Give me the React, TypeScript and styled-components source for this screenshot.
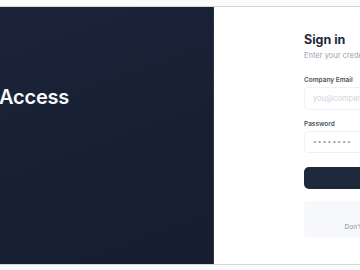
import React from "react";
import styled, { createGlobalStyle } from "styled-components";

const GlobalStyle = createGlobalStyle`
  html, body {
    margin: 0;
    padding: 0;
    background: #fbfbfc;
    overflow: hidden;
    font-family: Inter, "Noto Sans", "Liberation Sans", sans-serif;
  }
`;

const Shell = styled.div`
  width: 360px;
  height: 270px;
  padding-top: 6px;
  box-sizing: border-box;
  overflow: hidden;
`;

const Card = styled.div`
  display: grid;
  grid-template-columns: 214px 1fr;
  height: 257px;
  border-top: 1px solid #d4d6da;
  border-bottom: 1px solid #d4d6da;
  background: #ffffff;
`;

const Hero = styled.div`
  background: linear-gradient(160deg, #1b2438 0%, #172033 55%, #151d2f 100%);
  border-right: 1px solid #2a3347;
  display: flex;
  align-items: flex-start;
  padding-top: 78px;
  overflow: hidden;
`;

const HeroTitle = styled.h1`
  margin: 0 0 0 -1px;
  color: #f8fafc;
  font-size: 20px;
  line-height: 24px;
  font-weight: 600;
  letter-spacing: -0.2px;
  white-space: nowrap;
`;

const FormSide = styled.div`
  padding: 25px 0 0 90px;
  overflow: hidden;
`;

const Form = styled.div`
  width: 200px;
  display: flex;
  flex-direction: column;
`;

const Title = styled.h2`
  margin: 0;
  color: #1f2937;
  font-size: 12.5px;
  font-weight: 700;
  line-height: 16px;
`;

const Subtitle = styled.p`
  margin: 3px 0 0;
  color: #9aa3b0;
  font-size: 7.5px;
  line-height: 10px;
  white-space: nowrap;
`;

const Field = styled.div<{ $gap?: number }>`
  display: flex;
  flex-direction: column;
  margin-top: ${(p) => p.$gap ?? 10}px;
`;

const Label = styled.label`
  color: #4b5563;
  font-size: 6.5px;
  font-weight: 600;
  line-height: 9px;
`;

const Input = styled.div<{ $dots?: boolean; $h?: number }>`
  margin-top: 2px;
  height: ${(p) => p.$h ?? 22}px;
  border: 1px solid #eef1f5;
  border-radius: 4px;
  box-sizing: border-box;
  display: flex;
  align-items: center;
  padding-left: 8px;
  color: ${(p) => (p.$dots ? "#949dab" : "#cdd3dc")};
  font-size: ${(p) => (p.$dots ? "6.5px" : "7.5px")};
  letter-spacing: ${(p) => (p.$dots ? "1.2px" : "0")};
  white-space: nowrap;
`;

const Button = styled.button`
  margin-top: 14px;
  height: 22px;
  border: none;
  border-radius: 5px;
  background: #1e293b;
  color: #ffffff;
  font-family: inherit;
  font-size: 7.5px;
  font-weight: 600;
`;

const Note = styled.div`
  margin-top: 12px;
  height: 36px;
  border-radius: 4px;
  background: #f6f8fb;
  box-sizing: border-box;
  padding-top: 22px;
  text-align: center;
  color: #8a93a0;
  font-size: 6.5px;
  line-height: 8px;
  white-space: nowrap;
`;

export default function App() {
  return (
    <>
      <GlobalStyle />
      <Shell>
        <Card>
          <Hero>
            <HeroTitle>Access</HeroTitle>
          </Hero>
          <FormSide>
            <Form>
              <Title>Sign in</Title>
              <Subtitle>Enter your credentials to access your account</Subtitle>
              <Field $gap={15}>
                <Label>Company Email</Label>
                <Input $h={23}>you@company.com</Input>
              </Field>
              <Field $gap={10}>
                <Label>Password</Label>
                <Input $dots>••••••••</Input>
              </Field>
              <Button>Sign in</Button>
              <Note>Don't have an account? Contact admin</Note>
            </Form>
          </FormSide>
        </Card>
      </Shell>
    </>
  );
}
